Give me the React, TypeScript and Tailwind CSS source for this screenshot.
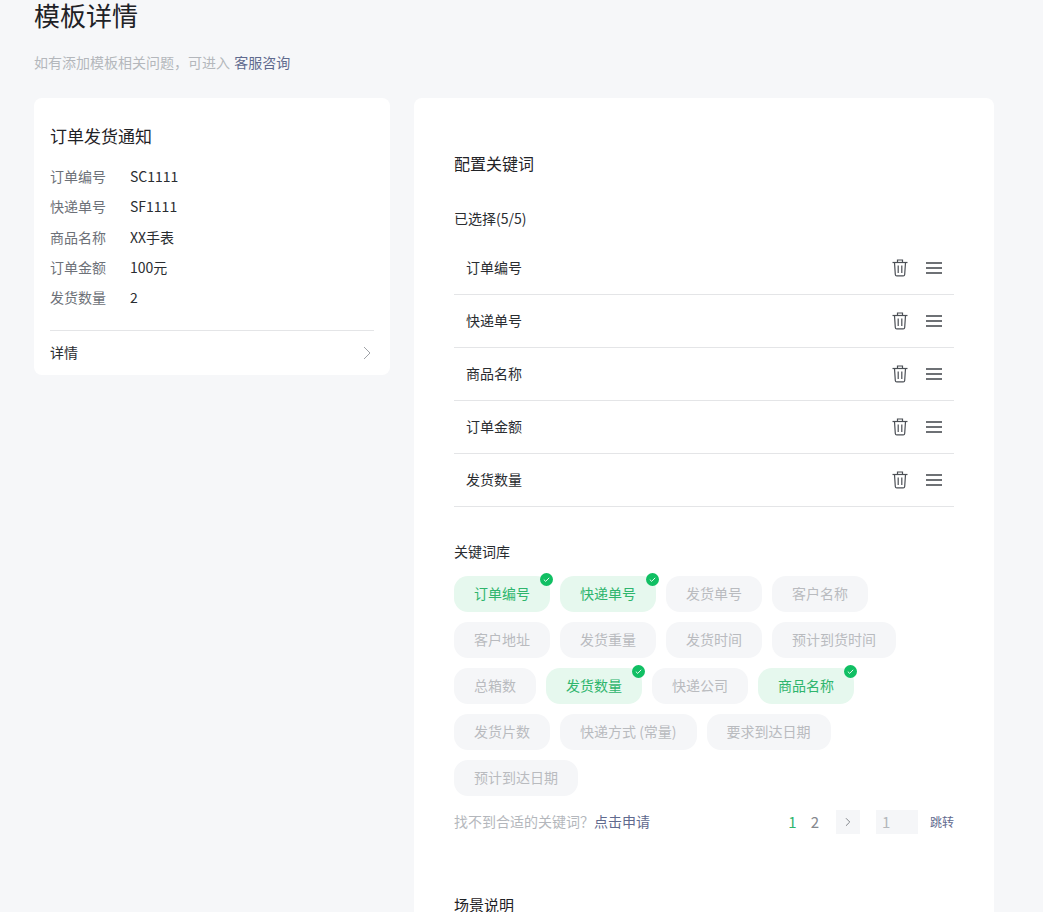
import { ChevronRight } from "lucide-react";

const fontStack = { fontFamily: '"Noto Sans CJK SC", "Noto Sans", sans-serif' };

const details = [
  { label: "订单编号", value: "SC1111" },
  { label: "快递单号", value: "SF1111" },
  { label: "商品名称", value: "XX手表" },
  { label: "订单金额", value: "100元" },
  { label: "发货数量", value: "2" },
];

const selected = ["订单编号", "快递单号", "商品名称", "订单金额", "发货数量"];

const keywords = [
  { name: "订单编号", on: true },
  { name: "快递单号", on: true },
  { name: "发货单号" },
  { name: "客户名称" },
  { name: "客户地址" },
  { name: "发货重量" },
  { name: "发货时间" },
  { name: "预计到货时间" },
  { name: "总箱数" },
  { name: "发货数量", on: true },
  { name: "快递公司" },
  { name: "商品名称", on: true },
  { name: "发货片数" },
  { name: "快递方式 (常量)" },
  { name: "要求到达日期" },
  { name: "预计到达日期" },
];

function TrashIcon() {
  return (
    <svg width="16" height="18" viewBox="0 0 16 18" fill="none" stroke="#4b4f55" strokeWidth="1.2">
      <path d="M0.5 3.5h15" />
      <path d="M5.5 3.2V1h5v2.2" />
      <path d="M2.5 3.5l.8 12a1.5 1.5 0 0 0 1.5 1.4h6.4a1.5 1.5 0 0 0 1.5-1.4l.8-12" />
      <path d="M6.2 6.5v7.5M9.8 6.5v7.5" />
    </svg>
  );
}

function MenuIcon() {
  return (
    <svg width="16" height="12" viewBox="0 0 16 12" fill="none" stroke="#3f4348" strokeWidth="1.3">
      <path d="M0 1h16M0 6h16M0 11h16" />
    </svg>
  );
}

function CheckBadge() {
  return (
    <span className="absolute top-[-3px] right-[-3px] flex h-[13px] w-[13px] items-center justify-center rounded-full bg-[#10bf63]">
      <svg width="9" height="9" viewBox="0 0 9 9" fill="none" stroke="#ffffff" strokeWidth="0.9">
        <path d="M1.8 4.6l1.9 1.8 3.5-3.6" />
      </svg>
    </span>
  );
}

export default function App() {
  return (
    <div style={fontStack} className="h-[912px] overflow-hidden bg-[#f6f7f9] pl-[34px]">
      <h1 className="h-[30px] text-[26px] leading-[30px] text-[#1f2226]">模板详情</h1>
      <p className="mt-[22px] h-[20px] text-sm leading-[20px] text-[#b4b7bc]">
        如有添加模板相关问题，可进入 <span className="ml-px text-[#5f6a8e]">客服咨询</span>
      </p>

      <div className="mt-[26px] flex items-start gap-6">
        {/* left card */}
        <div className="w-[356px] rounded-lg bg-white px-4 pt-[26px]">
          <h2 className="text-[17px] leading-[24px] text-[#1f2226]">订单发货通知</h2>
          <div className="mt-[18px] flex flex-col gap-[10.3px] pb-[23px]">
            {details.map(row => (
              <div key={row.label} className="flex h-[20px] text-sm leading-[20px]">
                <span className="w-[80px] text-[#6d7178]">{row.label}</span>
                <span className="text-[#2a2d31]">{row.value}</span>
              </div>
            ))}
          </div>
          <div className="flex h-[45px] items-center justify-between border-t border-[#e4e5e7]">
            <span className="mb-[2px] text-sm text-[#2a2d31]">详情</span>
            <svg width="8" height="14" viewBox="0 0 8 14" fill="none" stroke="#a0a3a8" strokeWidth="1" className="mr-[3px]">
              <path d="M1 1l6 6-6 6" />
            </svg>
          </div>
        </div>

        {/* right card */}
        <div className="w-[580px] rounded-lg bg-white px-10 pt-[53px] pb-10">
          <h2 className="text-base leading-[24px] text-[#1f2226]">配置关键词</h2>
          <p className="mt-[33px] text-sm leading-[20px] text-[#2a2d31]">已选择(5/5)</p>

          <div className="mt-[14px]">
            {selected.map(name => (
              <div key={name} className="flex h-[53px] items-center justify-between border-b border-[#e4e5e7] px-3">
                <span className="mb-[2px] text-sm text-[#2a2d31]">{name}</span>
                <div className="flex items-center gap-[18px]">
                  <TrashIcon />
                  <MenuIcon />
                </div>
              </div>
            ))}
          </div>

          <p className="mt-[34px] text-sm leading-[20px] text-[#2a2d31]">关键词库</p>
          <div className="mt-[15px] flex flex-wrap gap-[10px]">
            {keywords.map(k => (
              <span
                key={k.name}
                className={
                  k.on
                    ? "relative flex h-[36px] items-center rounded-[14px] bg-[#e6f8ee] px-5 pb-[2px] text-sm text-[#2fb56d]"
                    : "relative flex h-[36px] items-center rounded-[14px] bg-[#f5f6f8] px-5 pb-[2px] text-sm text-[#b9bbbf]"
                }
              >
                {k.name}
                {k.on && <CheckBadge />}
              </span>
            ))}
          </div>

          <div className="mt-[14px] flex h-[24px] items-center justify-between">
            <span className="mb-[2px] text-sm text-[#b4b7bc]">
              找不到合适的关键词？<span className="text-[#5f6a8e]">点击申请</span>
            </span>
            <div className="flex items-center text-[15px]">
              <span className="text-[#2fb56d]">1</span>
              <span className="ml-[14px] text-[#85888e]">2</span>
              <span className="ml-[17px] flex h-[24px] w-[24px] items-center justify-center bg-[#f5f6f8]">
                <ChevronRight size={14} strokeWidth={1.4} className="text-[#6a6d73]" />
              </span>
              <span className="ml-4 flex h-[24px] w-[42px] items-center bg-[#f5f6f8] pl-[6px] text-[#b4b7bc]">1</span>
              <span className="ml-3 text-xs text-[#5f6a8e]">跳转</span>
            </div>
          </div>

          <h2 className="mt-[59px] text-[15px] leading-[24px] text-[#1f2226]">场景说明</h2>
        </div>
      </div>
    </div>
  );
}
